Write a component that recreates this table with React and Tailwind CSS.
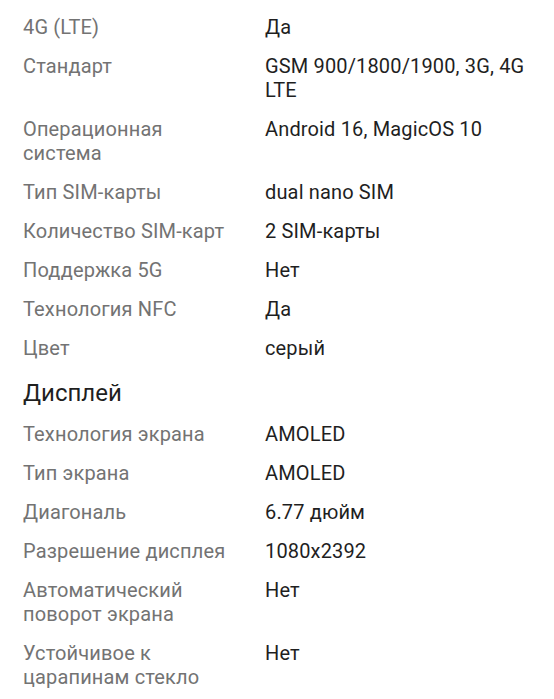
import React from "react";

const general = [
  ["4G (LTE)", "Да"],
  ["Стандарт", "GSM 900/1800/1900, 3G, 4G LTE"],
  ["Операционная система", "Android 16, MagicOS 10"],
  ["Тип SIM-карты", "dual nano SIM"],
  ["Количество SIM-карт", "2 SIM-карты"],
  ["Поддержка 5G", "Нет"],
  ["Технология NFC", "Да"],
  ["Цвет", "серый"],
];

const display = [
  ["Технология экрана", "AMOLED"],
  ["Тип экрана", "AMOLED"],
  ["Диагональ", "6.77 дюйм"],
  ["Разрешение дисплея", "1080x2392"],
  ["Автоматический поворот экрана", "Нет"],
  ["Устойчивое к царапинам стекло", "Нет"],
];

function Specs({ rows }) {
  return (
    <div className="grid grid-cols-[215px_1fr] gap-x-[27px] gap-y-[15px]">
      {rows.map(([label, value]) => (
        <React.Fragment key={label}>
          <div className="text-[#737373]">{label}</div>
          <div className="text-[#1f1f1f]">{value}</div>
        </React.Fragment>
      ))}
    </div>
  );
}

export default function App() {
  return (
    <div className="min-h-screen bg-white px-[23px] pt-[15px] font-['Roboto','Liberation_Sans',sans-serif] text-[20px] leading-[24px] tracking-[0.15px]">
      <Specs rows={general} />
      <h2 className="mt-[18px] mb-[14px] text-[24px] leading-[30px] tracking-normal text-[#1f1f1f]">Дисплей</h2>
      <Specs rows={display} />
    </div>
  );
}
